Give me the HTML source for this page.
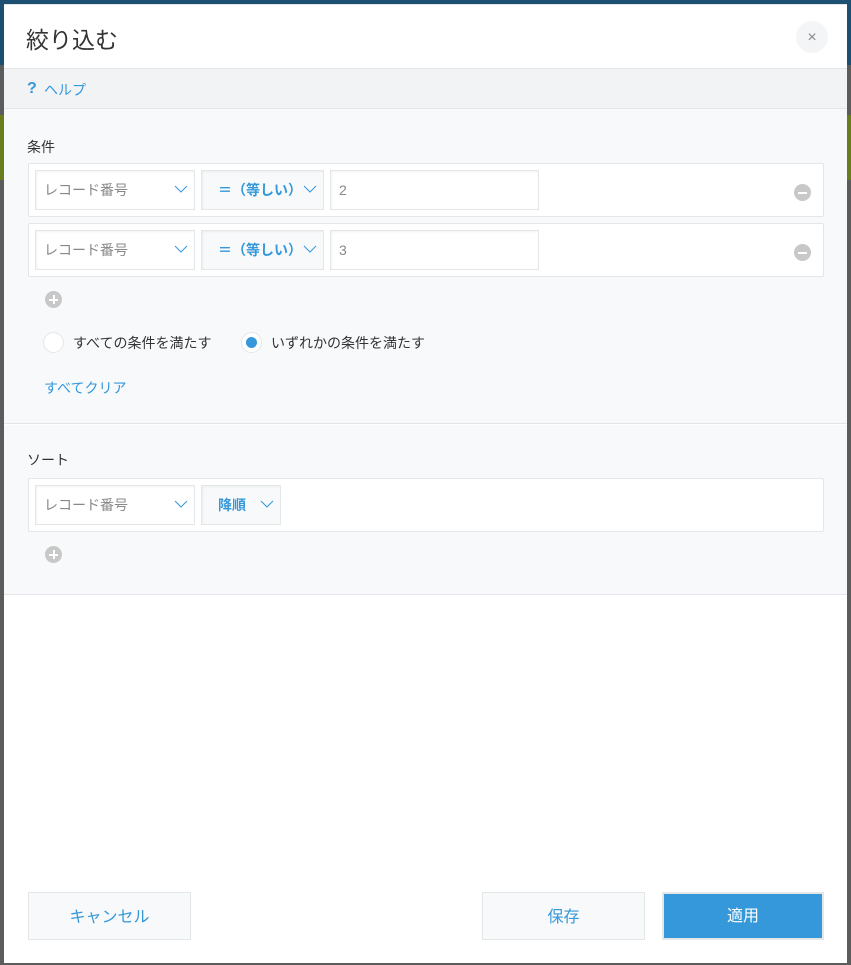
<!DOCTYPE html>
<html><head><meta charset="utf-8"><style>
*{box-sizing:border-box;margin:0;padding:0}
body{width:851px;height:965px;position:relative;overflow:hidden;background:#5c5c5c;font-family:"Liberation Sans","Noto Sans CJK JP",sans-serif}
.bg{position:absolute;left:0;right:0}
.m{position:absolute;left:4px;top:4px;width:843px;height:959px;background:#fff;border-top:1px solid #e3e5e8}
.abs{position:absolute}
.sel{position:absolute;height:40px;border:1px solid #e3e7e8;background:#fff;font-size:14px;color:#888;line-height:38px;padding-left:8px;box-shadow:inset 1px 1px 2px rgba(0,0,0,.05)}
.op{background:#f7f9fa;color:#3498db;font-weight:bold;padding-left:16px}
.chev{position:absolute;right:6px;top:13px;width:14px;height:10px}
.row{position:absolute;left:24px;width:796px;height:54px;background:#fff;border:1px solid #e3e7e8;border-radius:2px}
.circ{position:absolute;width:17px;height:17px;border-radius:50%;background:#c8c8c8}
.circ:after{content:"";position:absolute;left:4px;top:8px;width:9px;height:1.5px;background:#fff}
.plus:before{content:"";position:absolute;left:8px;top:4px;width:1.5px;height:9px;background:#fff}
.btn{position:absolute;top:887px;height:48px;border:1px solid #e3e7e8;background:#f7f9fa;color:#3498db;font-size:16px;text-align:center;line-height:50px}
</style></head><body>
<div class="bg" style="top:0;height:65px;background:#1d4f73"></div>
<div class="bg" style="top:115px;height:65px;background:#677d1e"></div>
<div class="m">
 <div class="abs" style="left:22px;top:16px;font-size:23px;color:#333">絞り込む</div>
 <div class="abs" style="left:792px;top:16px;width:32px;height:32px;border-radius:50%;background:#f4f5f7;color:#888;font-size:16px;text-align:center;line-height:33px">×</div>
 <div class="abs" style="left:0;top:63px;width:843px;height:41px;background:#f2f3f5;border-top:1px solid #e3e5e8;border-bottom:1px solid #e3e5e8">
  <span class="abs" style="left:23px;top:11px;font-size:16px;font-weight:bold;color:#3498db">?</span>
  <span class="abs" style="left:40px;top:11px;font-size:14px;color:#3498db">ヘルプ</span>
 </div>
 <div class="abs" style="left:0;top:104px;width:843px;height:315px;background:#f7f9fa;border-bottom:1px solid #e3e5e8">
  <div class="abs" style="left:23px;top:28px;font-size:14px;color:#333">条件</div>
  <div class="row" style="top:54px">
   <div class="sel" style="left:6px;top:6px;width:160px">レコード番号<svg class="chev" viewBox="0 0 14 10"><path d="M1 2l6 6 6-6" fill="none" stroke="#3498db" stroke-width="1"/></svg></div>
   <div class="sel op" style="left:172px;top:6px;width:123px">＝（等しい）<svg class="chev" viewBox="0 0 14 10"><path d="M1 2l6 6 6-6" fill="none" stroke="#3498db" stroke-width="1"/></svg></div>
   <div class="sel" style="left:301px;top:6px;width:209px">2</div>
   <div class="circ" style="left:765px;top:20px"></div>
  </div>
  <div class="row" style="top:114px">
   <div class="sel" style="left:6px;top:6px;width:160px">レコード番号<svg class="chev" viewBox="0 0 14 10"><path d="M1 2l6 6 6-6" fill="none" stroke="#3498db" stroke-width="1"/></svg></div>
   <div class="sel op" style="left:172px;top:6px;width:123px">＝（等しい）<svg class="chev" viewBox="0 0 14 10"><path d="M1 2l6 6 6-6" fill="none" stroke="#3498db" stroke-width="1"/></svg></div>
   <div class="sel" style="left:301px;top:6px;width:209px">3</div>
   <div class="circ" style="left:765px;top:20px"></div>
  </div>
  <div class="circ plus" style="left:41px;top:182px"></div>
  <div class="abs" style="left:39px;top:223px;width:21px;height:21px;border-radius:50%;background:#fff;border:1px solid #e3e7e8"></div>
  <div class="abs" style="left:69px;top:224px;font-size:14px;color:#333">すべての条件を満たす</div>
  <div class="abs" style="left:237px;top:223px;width:21px;height:21px;border-radius:50%;background:#fff;border:1px solid #e3e7e8"><div class="abs" style="left:4px;top:4px;width:11px;height:11px;border-radius:50%;background:#3498db"></div></div>
  <div class="abs" style="left:267px;top:224px;font-size:14px;color:#333">いずれかの条件を満たす</div>
  <div class="abs" style="left:40px;top:269px;font-size:14px;color:#3498db">すべてクリア</div>
 </div>
 <div class="abs" style="left:0;top:420px;width:843px;height:170px;background:#f7f9fa;border-bottom:1px solid #e3e5e8">
  <div class="abs" style="left:23px;top:25px;font-size:14px;color:#333">ソート</div>
  <div class="row" style="top:53px">
   <div class="sel" style="left:6px;top:6px;width:160px">レコード番号<svg class="chev" viewBox="0 0 14 10"><path d="M1 2l6 6 6-6" fill="none" stroke="#3498db" stroke-width="1"/></svg></div>
   <div class="sel op" style="left:172px;top:6px;width:80px">降順<svg class="chev" viewBox="0 0 14 10"><path d="M1 2l6 6 6-6" fill="none" stroke="#3498db" stroke-width="1"/></svg></div>
  </div>
  <div class="circ plus" style="left:41px;top:121px"></div>
 </div>
 <div class="btn" style="left:24px;width:163px">キャンセル</div>
 <div class="btn" style="left:478px;width:163px">保存</div>
 <div class="btn" style="left:658px;width:162px;background:#3498db;color:#fff;border:2px solid #e3e7e8;line-height:46px">適用</div>
</div>
</body></html>
